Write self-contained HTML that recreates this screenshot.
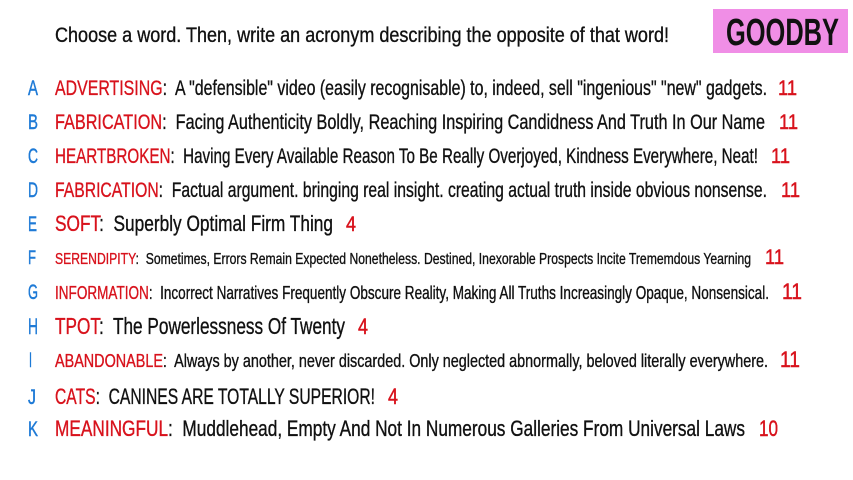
<!DOCTYPE html>
<html><head><meta charset="utf-8"><style>
html,body{margin:0;padding:0;background:#fff;width:853px;height:480px;overflow:hidden}
svg{display:block}
text{font-family:"Liberation Sans",sans-serif;white-space:pre}
.l{fill:#1e7ad6;stroke:#1e7ad6;stroke-width:0.45px}.w{fill:#d8121c}.b{fill:#111}.n{fill:#d8121c;stroke:#d8121c;stroke-width:0.45px}
.b,.w{stroke-width:0.35px}
.b{stroke:#111}.w{stroke:#d8121c}
</style></head><body>
<svg width="853" height="480" viewBox="0 0 853 480">
<rect x="713" y="9" width="135" height="44" fill="#f08ee6"/>
<text x="726" y="45" font-size="38" font-weight="bold" fill="#111" textLength="113" lengthAdjust="spacingAndGlyphs">GOODBY</text>
<text x="55" y="42" font-size="21" fill="#111" stroke="#111" stroke-width="0.35" textLength="614" lengthAdjust="spacingAndGlyphs">Choose a word. Then, write an acronym describing the opposite of that word!</text>

<g font-size="21">
<text class="l" x="28" y="95" textLength="10" lengthAdjust="spacingAndGlyphs">A</text>
<text x="55" y="95" textLength="712" lengthAdjust="spacingAndGlyphs"><tspan class="w">ADVERTISING</tspan><tspan class="b">:&#160; A "defensible" video (easily recognisable) to, indeed, sell "ingenious" "new" gadgets.</tspan></text>
<text class="n" x="778" y="95" textLength="19" lengthAdjust="spacingAndGlyphs">11</text>

<text class="l" x="28" y="129" textLength="10" lengthAdjust="spacingAndGlyphs">B</text>
<text x="55" y="129" textLength="710" lengthAdjust="spacingAndGlyphs"><tspan class="w">FABRICATION</tspan><tspan class="b">:&#160; Facing Authenticity Boldly, Reaching Inspiring Candidness And Truth In Our Name</tspan></text>
<text class="n" x="779" y="129" textLength="19" lengthAdjust="spacingAndGlyphs">11</text>

<text class="l" x="28" y="163" textLength="10" lengthAdjust="spacingAndGlyphs">C</text>
<text x="55" y="163" textLength="703" lengthAdjust="spacingAndGlyphs"><tspan class="w">HEARTBROKEN</tspan><tspan class="b">:&#160; Having Every Available Reason To Be Really Overjoyed, Kindness Everywhere, Neat!</tspan></text>
<text class="n" x="771" y="163" textLength="19" lengthAdjust="spacingAndGlyphs">11</text>

<text class="l" x="28" y="197" textLength="10" lengthAdjust="spacingAndGlyphs">D</text>
<text x="55" y="197" textLength="712" lengthAdjust="spacingAndGlyphs"><tspan class="w">FABRICATION</tspan><tspan class="b">:&#160; Factual argument. bringing real insight. creating actual truth inside obvious nonsense.</tspan></text>
<text class="n" x="781" y="197" textLength="19" lengthAdjust="spacingAndGlyphs">11</text>

<text class="l" x="28" y="231" textLength="9" lengthAdjust="spacingAndGlyphs">E</text>
<text x="55" y="231" font-size="22" textLength="278" lengthAdjust="spacingAndGlyphs"><tspan class="w">SOFT</tspan><tspan class="b">:&#160; Superbly Optimal Firm Thing</tspan></text>
<text class="n" x="346" y="231" textLength="10" lengthAdjust="spacingAndGlyphs">4</text>

<text class="l" x="28" y="264" font-size="19" textLength="8" lengthAdjust="spacingAndGlyphs">F</text>
<text x="55" y="264" font-size="16" textLength="696" lengthAdjust="spacingAndGlyphs"><tspan class="w">SERENDIPITY</tspan><tspan class="b">:&#160; Sometimes, Errors Remain Expected Nonetheless. Destined, Inexorable Prospects Incite Trememdous Yearning</tspan></text>
<text class="n" x="765" y="264" textLength="19" lengthAdjust="spacingAndGlyphs">11</text>

<text class="l" x="28" y="299" textLength="10" lengthAdjust="spacingAndGlyphs">G</text>
<text x="55" y="299" font-size="18" textLength="714" lengthAdjust="spacingAndGlyphs"><tspan class="w">INFORMATION</tspan><tspan class="b">:&#160; Incorrect Narratives Frequently Obscure Reality, Making All Truths Increasingly Opaque, Nonsensical.</tspan></text>
<text class="n" x="782" y="299" font-size="22" textLength="20" lengthAdjust="spacingAndGlyphs">11</text>

<text class="l" x="28" y="334" font-size="22" textLength="10" lengthAdjust="spacingAndGlyphs">H</text>
<text x="55" y="334" font-size="23" textLength="290" lengthAdjust="spacingAndGlyphs"><tspan class="w">TPOT</tspan><tspan class="b">:&#160; The Powerlessness Of Twenty</tspan></text>
<text class="n" x="358" y="334" font-size="22" textLength="10" lengthAdjust="spacingAndGlyphs">4</text>

<text class="l" x="29" y="367" textLength="3" lengthAdjust="spacingAndGlyphs">I</text>
<text x="55" y="367" font-size="18" textLength="713" lengthAdjust="spacingAndGlyphs"><tspan class="w">ABANDONABLE</tspan><tspan class="b">:&#160; Always by another, never discarded. Only neglected abnormally, beloved literally everywhere.</tspan></text>
<text class="n" x="780" y="367" font-size="22" textLength="20" lengthAdjust="spacingAndGlyphs">11</text>

<text class="l" x="28" y="404" textLength="8" lengthAdjust="spacingAndGlyphs">J</text>
<text x="55" y="404" font-size="22" textLength="320" lengthAdjust="spacingAndGlyphs"><tspan class="w">CATS</tspan><tspan class="b">:&#160; CANINES ARE TOTALLY SUPERIOR!</tspan></text>
<text class="n" x="388" y="404" font-size="22" textLength="10" lengthAdjust="spacingAndGlyphs">4</text>

<text class="l" x="28" y="436" textLength="10" lengthAdjust="spacingAndGlyphs">K</text>
<text x="55" y="436" font-size="22" textLength="690" lengthAdjust="spacingAndGlyphs"><tspan class="w">MEANINGFUL</tspan><tspan class="b">:&#160; Muddlehead, Empty And Not In Numerous Galleries From Universal Laws</tspan></text>
<text class="n" x="759" y="436" font-size="22" textLength="19" lengthAdjust="spacingAndGlyphs">10</text>
</g>
</svg>
</body></html>
